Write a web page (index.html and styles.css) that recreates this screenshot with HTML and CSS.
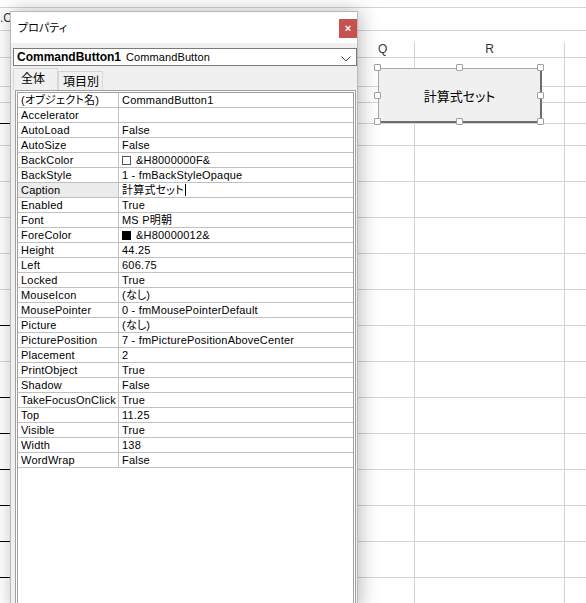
FILE: index.html
```html
<!DOCTYPE html>
<html lang="ja">
<head>
<meta charset="utf-8">
<title>プロパティ</title>
<link rel="stylesheet" href="styles.css">
</head>
<body>
<div class="sheet">
  <div class="topbar"></div>
  <div class="fbar"><span class="fx">.C</span></div>
  <div class="gap"></div>
  <div class="colhead">
    <div class="cl"></div><div class="cq">Q</div><div class="cr">R</div><div class="cs"></div>
  </div>
  <div class="row h29"><div class="cl"></div><div class="cq"></div><div class="cr"></div><div class="cs"></div></div>
  <div class="row h16"><div class="cl"></div><div class="cq"></div><div class="cr"></div><div class="cs"></div></div>
  <div class="row h21"><div class="cl blk"></div><div class="cq"></div><div class="cr"></div><div class="cs"></div></div>
  <div class="row h22"><div class="cl"></div><div class="cq"></div><div class="cr"></div><div class="cs"></div></div>
  <div class="row h36"><div class="cl"></div><div class="cq"></div><div class="cr"></div><div class="cs"></div></div>
  <div class="row h36"><div class="cl"></div><div class="cq"></div><div class="cr"></div><div class="cs"></div></div>
  <div class="row h36"><div class="cl"></div><div class="cq"></div><div class="cr"></div><div class="cs"></div></div>
  <div class="row h36"><div class="cl"></div><div class="cq"></div><div class="cr"></div><div class="cs"></div></div>
  <div class="row h36"><div class="cl blk"></div><div class="cq"></div><div class="cr"></div><div class="cs"></div></div>
  <div class="row h36"><div class="cl"></div><div class="cq"></div><div class="cr"></div><div class="cs"></div></div>
  <div class="row h36"><div class="cl blk"></div><div class="cq"></div><div class="cr"></div><div class="cs"></div></div>
  <div class="row h36"><div class="cl blk"></div><div class="cq"></div><div class="cr"></div><div class="cs"></div></div>
  <div class="row h36"><div class="cl blk"></div><div class="cq"></div><div class="cr"></div><div class="cs"></div></div>
  <div class="row h36"><div class="cl blk"></div><div class="cq"></div><div class="cr"></div><div class="cs"></div></div>
  <div class="row h36"><div class="cl blk"></div><div class="cq"></div><div class="cr"></div><div class="cs"></div></div>
  <div class="row h36"><div class="cl blk"></div><div class="cq"></div><div class="cr"></div><div class="cs"></div></div>
  <div class="row h36"><div class="cl"></div><div class="cq"></div><div class="cr"></div><div class="cs"></div></div>

  <div class="selframe">
    <div class="cmdbtn">計算式セット</div>
    <span class="hd h-tl"></span><span class="hd h-tc"></span><span class="hd h-tr"></span>
    <span class="hd h-ml"></span><span class="hd h-mr"></span>
    <span class="hd h-bl"></span><span class="hd h-bc"></span><span class="hd h-br"></span>
  </div>
</div>

<div class="dialog">
  <div class="titlebar">
    <span class="title">プロパティ</span>
    <span class="close">×</span>
  </div>
  <div class="dbody">
    <div class="combo">
      <span class="cb-name">CommandButton1</span><span class="cb-type">CommandButton</span>
      <svg class="chev" width="10" height="6" viewBox="0 0 10 6"><polyline points="0.5,0.5 5,5 9.5,0.5" fill="none" stroke="#444" stroke-width="1"/></svg>
    </div>
    <div class="tabs">
      <div class="tab sel">全体</div>
      <div class="tab">項目別</div>
    </div>
    <div class="grid">
      <div class="gin">
        <div class="prow"><div class="pn jp">(オブジェクト名)</div><div class="pv">CommandButton1</div></div>
        <div class="prow"><div class="pn">Accelerator</div><div class="pv"></div></div>
        <div class="prow"><div class="pn">AutoLoad</div><div class="pv">False</div></div>
        <div class="prow"><div class="pn">AutoSize</div><div class="pv">False</div></div>
        <div class="prow"><div class="pn">BackColor</div><div class="pv"><span class="sw sw-w"></span>&amp;H8000000F&amp;</div></div>
        <div class="prow"><div class="pn">BackStyle</div><div class="pv">1 - fmBackStyleOpaque</div></div>
        <div class="prow"><div class="pn cur">Caption</div><div class="pv jp">計算式セット<span class="caret"></span></div></div>
        <div class="prow"><div class="pn">Enabled</div><div class="pv">True</div></div>
        <div class="prow"><div class="pn">Font</div><div class="pv jp">MS P明朝</div></div>
        <div class="prow"><div class="pn">ForeColor</div><div class="pv"><span class="sw sw-b"></span>&amp;H80000012&amp;</div></div>
        <div class="prow"><div class="pn">Height</div><div class="pv">44.25</div></div>
        <div class="prow"><div class="pn">Left</div><div class="pv">606.75</div></div>
        <div class="prow"><div class="pn">Locked</div><div class="pv">True</div></div>
        <div class="prow"><div class="pn">MouseIcon</div><div class="pv jp">(なし)</div></div>
        <div class="prow"><div class="pn">MousePointer</div><div class="pv">0 - fmMousePointerDefault</div></div>
        <div class="prow"><div class="pn">Picture</div><div class="pv jp">(なし)</div></div>
        <div class="prow"><div class="pn">PicturePosition</div><div class="pv">7 - fmPicturePositionAboveCenter</div></div>
        <div class="prow"><div class="pn">Placement</div><div class="pv">2</div></div>
        <div class="prow"><div class="pn">PrintObject</div><div class="pv">True</div></div>
        <div class="prow"><div class="pn">Shadow</div><div class="pv">False</div></div>
        <div class="prow"><div class="pn">TakeFocusOnClick</div><div class="pv">True</div></div>
        <div class="prow"><div class="pn">Top</div><div class="pv">11.25</div></div>
        <div class="prow"><div class="pn">Visible</div><div class="pv">True</div></div>
        <div class="prow"><div class="pn">Width</div><div class="pv">138</div></div>
        <div class="prow"><div class="pn">WordWrap</div><div class="pv">False</div></div>
      </div>
    </div>
  </div>
</div>
</body>
</html>
```

FILE: styles.css
```css
* { box-sizing: border-box; }
html, body { margin: 0; padding: 0; }
body {
  width: 586px;
  height: 603px;
  overflow: hidden;
  position: relative;
  background: #fff;
  font-family: "Liberation Sans", "Noto Sans CJK JP", sans-serif;
  color: #000;
}

/* ---------- spreadsheet background ---------- */
.sheet { width: 586px; height: 603px; position: relative; }
.topbar { height: 8px; border-bottom: 1px solid #d4d4d4; }
.fbar { height: 23px; border-bottom: 1px solid #d4d4d4; font-size: 12px; line-height: 20px; color: #333; }
.fx { display: inline-block; }
.gap { height: 11px; }
.colhead { display: flex; height: 16px; border-bottom: 1px solid #d4d4d4; font-size: 12px; line-height: 15px; color: #333; }
.colhead > div { height: 15px; }
.cl { width: 350px; flex: none; }
.cq { width: 65px; flex: none; border-right: 1px solid #d4d4d4; padding-left: 28px; }
.cr { width: 150px; flex: none; border-right: 1px solid #d4d4d4; text-align: center; }
.cs { flex: 1; }
.row { display: flex; border-bottom: 1px solid #d4d4d4; }
.cl.blk { box-shadow: inset 0 -1px 0 #000; margin-bottom: -1px; }
.h16 { height: 16px; }
.h21 { height: 21px; }
.h22 { height: 22px; }
.h29 { height: 29px; }
.h36 { height: 36px; }

.selframe { position: absolute; left: 378px; top: 68px; width: 164px; height: 55px; }
.cmdbtn {
  width: 100%; height: 100%;
  background: #f0f0f0;
  border-left: 1px solid #a8a8a8; border-top: 1px solid #a8a8a8;
  border-right: 2px solid #6d6d6d; border-bottom: 2px solid #6d6d6d;
  font-family: "Noto Sans CJK JP", sans-serif;
  font-size: 13px; font-feature-settings: "palt";
  display: flex; align-items: center; justify-content: center;
  padding-top: 1px;
}
.hd { position: absolute; width: 7px; height: 7px; background: #fff; border: 1px solid #a0a0a0; border-radius: 1px; }
.h-tl { left: -4px; top: -4px; }
.h-tc { left: 78px; top: -4px; }
.h-tr { left: 159px; top: -4px; }
.h-ml { left: -4px; top: 24px; }
.h-mr { left: 159px; top: 24px; }
.h-bl { left: -4px; top: 50px; }
.h-bc { left: 78px; top: 50px; }
.h-br { left: 159px; top: 50px; }

/* ---------- properties dialog ---------- */
.dialog {
  position: absolute; left: 10px; top: 11px;
  width: 348px; height: 600px;
  border: 1px solid #b9b9b9;
  background: #f0f0f0;
  display: flex; flex-direction: column;
  box-shadow: 2px 0 18px rgba(0,0,0,0.28);
}
.titlebar {
  height: 31px; flex: none; background: #fff;
  display: flex; align-items: flex-start; justify-content: space-between;
}
.title {
  font-family: "Noto Sans CJK JP", sans-serif; font-feature-settings: "palt";
  font-size: 11px; line-height: 16px; margin: 7px 0 0 7px; color: #000;
}
.close {
  width: 18px; height: 19px; margin-top: 7px;
  background: #c75050; color: #fff;
  font-size: 11px; font-weight: bold; line-height: 18px; text-align: center;
}
.dbody { flex: 1; display: flex; flex-direction: column; padding: 5px 0 0 2px; min-height: 0; }
.combo {
  height: 18px; width: 344px; flex: none;
  background: #fff; border: 1px solid #7a7a7a;
  display: flex; align-items: center; padding-left: 3px; position: relative;
  white-space: nowrap;
}
.cb-name { font-size: 12px; font-weight: bold; line-height: 16px; }
.cb-type { font-size: 11px; line-height: 16px; margin-left: 5px; letter-spacing: 0.1px; }
.chev { position: absolute; right: 5px; top: 7px; }
.tabs { display: flex; align-items: flex-end; margin-top: 2px; height: 22px; flex: none; }
.tab {
  font-family: "Noto Sans CJK JP", sans-serif; font-size: 12px; line-height: 17px;
  border: 1px solid #d6d6d6; border-bottom: 0;
  height: 19px; width: 45px; padding-left: 4px; background: #f0f0f0;
}
.tab.sel { height: 22px; width: 45px; padding-left: 7px; padding-top: 0; }
.grid {
  flex: 1; margin-left: 2px; width: 341px; min-height: 0;
  border: 1px solid #a0a0a0; padding: 1px; background: #fff;
}
.gin { height: 100%; border: 1px solid #a0a0a0; background: #fff; overflow: hidden; }
.prow { display: flex; height: 15px; border-bottom: 1px solid #c0c0c0; font-size: 11px; line-height: 14px; white-space: nowrap; letter-spacing: 0.2px; }
.pn { width: 101px; flex: none; border-right: 1px solid #c0c0c0; padding-left: 3px; overflow: hidden; }
.pn.cur { background: #ececec; }
.pv { flex: 1; padding-left: 3px; display: flex; align-items: center; overflow: hidden; }
.jp { font-feature-settings: "palt"; }
.sw { display: inline-block; width: 9px; height: 9px; margin-right: 5px; flex: none; }
.sw-w { background: #fff; border: 1px solid #555; }
.sw-b { background: #000; }
.caret { display: inline-block; width: 1px; height: 12px; background: #000; margin-left: 1px; }
```
